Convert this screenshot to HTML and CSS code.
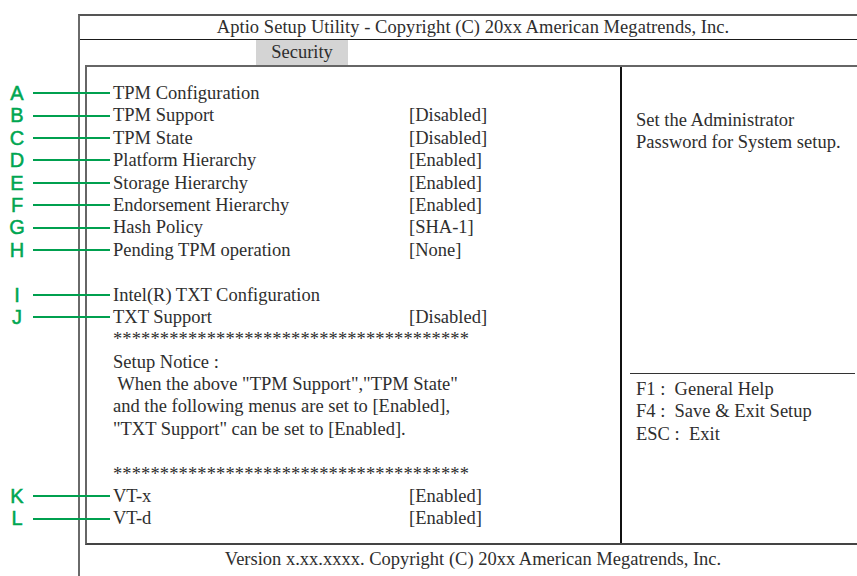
FILE: index.html
```html
<!DOCTYPE html>
<html lang="en">

<head>
    <title>Aptio Setup Utility - Security</title>
    <meta charset="UTF-8">
    <link rel="stylesheet" href="styles.css">
</head>

<body>
    <div class="frame">
        <div class="title">Aptio Setup Utility - Copyright (C) 20xx American Megatrends, Inc.</div>
        <div class="tabs"><span class="tab">Security</span></div>
        <div class="screen">
            <div class="items">
                <div class="row"><span class="callout"><b>A</b><i></i></span><span>TPM Configuration</span></div>
                <div class="row"><span class="callout"><b>B</b><i></i></span><span>TPM Support</span><span>[Disabled]</span></div>
                <div class="row"><span class="callout"><b>C</b><i></i></span><span>TPM State</span><span>[Disabled]</span></div>
                <div class="row"><span class="callout"><b>D</b><i></i></span><span>Platform Hierarchy</span><span>[Enabled]</span></div>
                <div class="row"><span class="callout"><b>E</b><i></i></span><span>Storage Hierarchy</span><span>[Enabled]</span></div>
                <div class="row"><span class="callout"><b>F</b><i></i></span><span>Endorsement Hierarchy</span><span>[Enabled]</span></div>
                <div class="row"><span class="callout"><b>G</b><i></i></span><span>Hash Policy</span><span>[SHA-1]</span></div>
                <div class="row"><span class="callout"><b>H</b><i></i></span><span>Pending TPM operation</span><span>[None]</span></div>
                <div class="row"></div>
                <div class="row"><span class="callout"><b>I</b><i></i></span><span>Intel(R) TXT Configuration</span></div>
                <div class="row"><span class="callout"><b>J</b><i></i></span><span>TXT Support</span><span>[Disabled]</span></div>
                <div class="line stars">**************************************</div>
                <div class="line">Setup Notice :</div>
                <div class="line"> When the above "TPM Support","TPM State"</div>
                <div class="line">and the following menus are set to [Enabled],</div>
                <div class="line">"TXT Support" can be set to [Enabled].</div>
                <div class="line"></div>
                <div class="line stars">**************************************</div>
                <div class="row"><span class="callout"><b>K</b><i></i></span><span>VT-x</span><span>[Enabled]</span></div>
                <div class="row"><span class="callout"><b>L</b><i></i></span><span>VT-d</span><span>[Enabled]</span></div>
            </div>
            <div class="help">
                <div class="help-text">Set the Administrator<br>Password for System setup.</div>
                <div class="keys">
                    <div class="line">F1 :  General Help</div>
                    <div class="line">F4 :  Save &amp; Exit Setup</div>
                    <div class="line">ESC :  Exit</div>
                </div>
            </div>
        </div>
        <div class="footer">Version x.xx.xxxx. Copyright (C) 20xx American Megatrends, Inc.</div>
    </div>
</body>

</html>
```

FILE: styles.css
```css
html {
    height: 100%;
}

body {
    margin: 0;
    background-color: #fff;
    color: #2e2e2e;
    font-family: "Liberation Serif", "Times New Roman", serif;
    font-size: 18.5px;
    line-height: 22.4px;
    height: 100%;
    overflow: hidden;
}

.frame {
    box-sizing: border-box;
    margin: 14px 0 0 78px;
    height: 562px;
    border-top: 2px solid #555;
    border-left: 2px solid #6a6a6a;
    display: flex;
    flex-direction: column;
}

.title {
    height: 23px;
    line-height: 22px;
    border-bottom: 1px solid #1a1a1a;
    text-align: center;
    padding-left: 9px;
    letter-spacing: 0.05px;
}

.tabs {
    height: 25px;
    padding-left: 176px;
}

.tab {
    display: inline-block;
    width: 92px;
    height: 25px;
    line-height: 25px;
    text-align: center;
    background-color: #d4d4d4;
}

.screen {
    box-sizing: border-box;
    height: 480px;
    margin-left: 5px;
    border-top: 2px solid #666;
    border-left: 2px solid #666;
    border-bottom: 2px solid #444;
    display: flex;
}

.items {
    width: 533px;
    padding: 15px 0 0 26px;
    box-sizing: border-box;
}

.row {
    position: relative;
    display: grid;
    grid-template-columns: 296px auto;
    height: 22.4px;
}

.line {
    height: 22.4px;
    white-space: pre;
}

.stars {
    letter-spacing: 0.12px;
}

/* green annotation letters on the left */
.callout {
    position: absolute;
    top: 0;
    right: calc(100% + 3px);
    height: 100%;
    display: flex;
    align-items: center;
    gap: 4px;
}

.callout b {
    width: 24px;
    text-align: center;
    font-family: "Liberation Sans", Arial, sans-serif;
    font-size: 20px;
    font-weight: normal;
    color: #00a651;
    -webkit-text-stroke: 0.5px #00a651;
}

.callout i {
    width: 77px;
    height: 2px;
    background-color: #00a04f;
}

.help {
    flex: 1;
    border-left: 2px solid #111;
    display: flex;
    flex-direction: column;
}

.help-text {
    flex: 1;
    padding: 42px 0 0 14px;
}

.keys {
    height: 170px;
    box-sizing: border-box;
    margin: 0 2px 0 8px;
    border-top: 1.5px solid #333;
    padding: 4px 0 0 6px;
}

.footer {
    padding-top: 3px;
    padding-left: 9px;
    line-height: 22px;
    text-align: center;
}
```
